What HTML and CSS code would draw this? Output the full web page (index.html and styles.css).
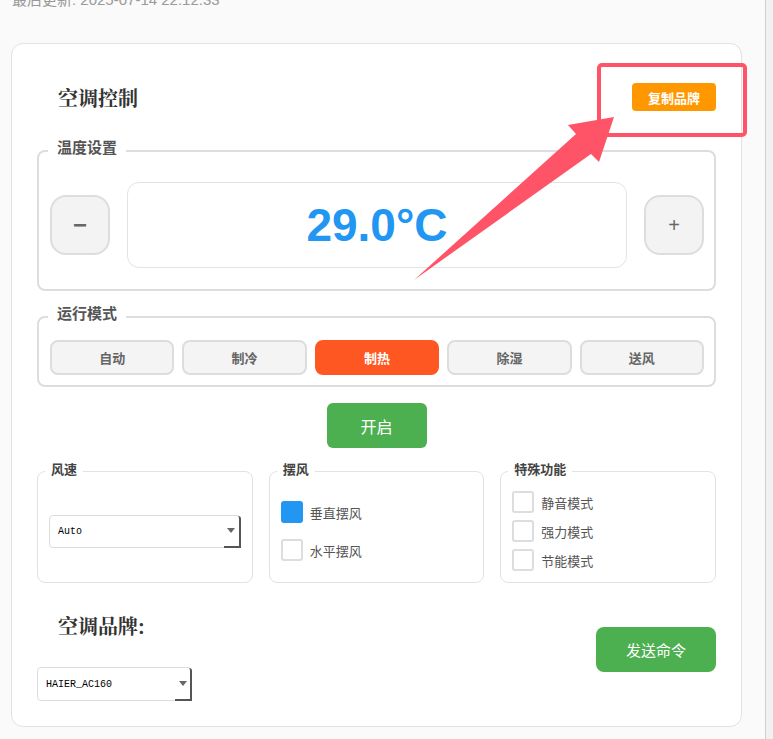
FILE: index.html
```html
<!DOCTYPE html>
<html lang="zh-CN">
<head>
  <meta charset="UTF-8">
  <meta name="viewport" content="width=device-width, initial-scale=1.0">
  <title>空调控制</title>
  <link rel="stylesheet" href="styles.css">
</head>
<body>
  <div class="page">
    <p class="updated">最后更新: 2025-07-14 22:12:33</p>

    <div class="card">
      <div class="card-head">
        <h2>空调控制</h2>
        <button class="copy-btn">复制品牌</button>
      </div>

      <fieldset class="group temp">
        <legend>温度设置</legend>
        <div class="temp-row">
          <button class="step minus">−</button>
          <div class="temp-display">29.0°C</div>
          <button class="step plus">+</button>
        </div>
      </fieldset>

      <fieldset class="group mode">
        <legend>运行模式</legend>
        <div class="mode-row">
          <button class="mode-btn">自动</button>
          <button class="mode-btn">制冷</button>
          <button class="mode-btn active">制热</button>
          <button class="mode-btn">除湿</button>
          <button class="mode-btn">送风</button>
        </div>
      </fieldset>

      <div class="power-row">
        <button class="power-btn">开启</button>
      </div>

      <div class="options">
        <fieldset class="opt">
          <legend>风速</legend>
          <div class="select-wrap">
            <select class="select">
              <option>Auto</option>
              <option>Low</option>
              <option>Medium</option>
              <option>High</option>
            </select>
            <span class="select-arrow"></span>
          </div>
        </fieldset>

        <fieldset class="opt swing">
          <legend>摆风</legend>
          <label class="check"><span class="box checked"></span>垂直摆风</label>
          <label class="check"><span class="box"></span>水平摆风</label>
        </fieldset>

        <fieldset class="opt special">
          <legend>特殊功能</legend>
          <label class="check"><span class="box"></span>静音模式</label>
          <label class="check"><span class="box"></span>强力模式</label>
          <label class="check"><span class="box"></span>节能模式</label>
        </fieldset>
      </div>

      <div class="footer">
        <div class="brand">
          <h2>空调品牌:</h2>
          <div class="select-wrap brand-select">
            <select class="select">
              <option>HAIER_AC160</option>
            </select>
            <span class="select-arrow"></span>
          </div>
        </div>
        <button class="send-btn">发送命令</button>
      </div>
    </div>
  </div>
  <div class="edge"></div>

  <!-- 标注：红框 + 箭头 -->
  <svg class="annotation" width="773" height="739" viewBox="0 0 773 739">
    <rect x="599" y="65" width="146" height="70" rx="3" fill="none" stroke="#ff5468" stroke-width="4"/>
    <polygon points="414,280 576,134 568,125 614,117 599,162 591,154" fill="#ff5468"/>
  </svg>
</body>
</html>
```

FILE: styles.css
```css
html, body {
  height: 100%;
}
body {
  margin: 0;
  display: flex;
  font-family: "Noto Sans CJK SC", sans-serif;
  background-color: #f1f1f1;
  color: #333;
}
.page {
  flex: 1;
  background-color: #fafafa;
}
.edge {
  width: 7px;
  border-left: 1px solid #cfcfcf;
  background-color: #f1f1f1;
}
.updated {
  margin: -10px 0 0 12px;
  font-family: "Liberation Sans", "Noto Sans CJK SC", sans-serif;
  font-size: 15px;
  line-height: 20px;
  color: #999;
}
.card {
  box-sizing: border-box;
  width: 731px;
  margin: 33px 0 0 11px;
  padding: 25px;
  background: white;
  border: 1px solid #e2e2e2;
  border-radius: 12px;
}
button {
  font-family: inherit;
  cursor: pointer;
}
.card-head {
  height: 56px;
  display: flex;
  align-items: center;
  justify-content: space-between;
}
.card-head h2,
.brand h2 {
  margin: 0 0 0 21px;
  font-family: "Noto Serif CJK SC", "Noto Sans CJK SC", serif;
  font-size: 20px;
  font-weight: bold;
  color: #333;
}
.copy-btn {
  width: 84px;
  height: 28px;
  border: none;
  border-radius: 4px;
  background-color: #ff9800;
  color: white;
  font-size: 13px;
  font-weight: bold;
}

/* fieldset groups */
.group {
  margin: 14px 0 0;
  min-width: 0;
  border: 2px solid #dddddd;
  border-radius: 8px;
}
.group legend {
  margin-left: -2px;
  padding: 0 9px 8px;
  font-size: 15px;
  line-height: 16px;
  font-weight: bold;
  color: #555;
}
.temp {
  padding: 19px 10px 21px 11px;
}
.temp-row {
  display: flex;
  align-items: center;
  gap: 17px;
}
.step {
  box-sizing: border-box;
  width: 60px;
  height: 60px;
  border: 2px solid #dddddd;
  border-radius: 16px;
  background-color: #f3f3f3;
  color: #666;
  font-family: "Liberation Sans", sans-serif;
  padding: 0;
}
.minus {
  font-size: 24px;
  font-weight: bold;
}
.plus {
  font-size: 20px;
}
.temp-display {
  flex: 1;
  height: 86px;
  box-sizing: border-box;
  border: 1px solid #e3e3e3;
  border-radius: 12px;
  display: flex;
  align-items: center;
  justify-content: center;
  font-family: "Liberation Sans", sans-serif;
  font-size: 46px;
  font-weight: bold;
  color: #2196f3;
}
.mode {
  padding: 11px 10px 10px 11px;
}
.mode-row {
  display: grid;
  grid-template-columns: repeat(5, 1fr);
  gap: 8px;
}
.mode-btn {
  height: 35px;
  border: 2px solid #dddddd;
  border-radius: 8px;
  background-color: #f4f4f4;
  color: #666;
  font-size: 13px;
  font-weight: bold;
}
.mode-btn.active {
  background-color: #ff5722;
  border-color: #ff5722;
  color: white;
}
.power-row {
  margin-top: 16px;
  display: flex;
  justify-content: center;
}
.power-btn {
  width: 100px;
  height: 45px;
  border: none;
  border-radius: 6px;
  background-color: #4caf50;
  color: white;
  font-size: 16px;
}

/* options */
.options {
  margin-top: 14px;
  display: grid;
  grid-template-columns: repeat(3, 1fr);
  gap: 16px;
}
.opt {
  margin: 0;
  min-width: 0;
  padding: 11px;
  border: 1px solid #e2e2e2;
  border-radius: 8px;
  display: flex;
  flex-direction: column;
  justify-content: center;
}
.opt legend {
  margin-left: -4px;
  padding: 0 6px 4px;
  font-size: 13px;
  line-height: 14px;
  font-weight: bold;
  color: #444;
}
.swing {
  gap: 16px;
}
.special {
  gap: 7px;
}
.check {
  display: flex;
  align-items: center;
  gap: 7px;
  font-size: 13px;
  color: #555;
}
.box {
  box-sizing: border-box;
  width: 22px;
  height: 22px;
  border: 2px solid #dddddd;
  border-radius: 3px;
  background: white;
}
.box.checked {
  border-color: #2196f3;
  background-color: #2196f3;
}

/* select */
.select-wrap {
  position: relative;
  height: 33px;
}
.select {
  appearance: none;
  width: 100%;
  height: 100%;
  box-sizing: border-box;
  padding: 0 8px;
  border: 1px solid #dcdcdc;
  border-radius: 4px;
  background: white;
  font-family: "Liberation Mono", monospace;
  font-size: 10px;
  color: #000;
}
.select-arrow {
  position: absolute;
  top: 1px;
  right: 0;
  bottom: 0;
  width: 15px;
  border-right: 2px solid #555;
  border-bottom: 2px solid #555;
  border-top-right-radius: 3px;
  display: flex;
  align-items: center;
  justify-content: center;
}
.select-arrow::after {
  content: "";
  border-left: 4px solid transparent;
  border-right: 4px solid transparent;
  border-top: 5px solid #666;
}

/* footer */
.footer {
  margin-top: 15px;
  display: flex;
  align-items: center;
  justify-content: space-between;
}
.brand h2 {
  margin: 14px 0 27px 21px;
  line-height: 28px;
}
.brand-select {
  width: 155px;
  height: 34px;
}
.send-btn {
  width: 120px;
  height: 45px;
  border: none;
  border-radius: 8px;
  background-color: #4caf50;
  color: white;
  font-size: 15px;
}

.annotation {
  position: absolute;
  top: 0;
  left: 0;
  pointer-events: none;
}
```
